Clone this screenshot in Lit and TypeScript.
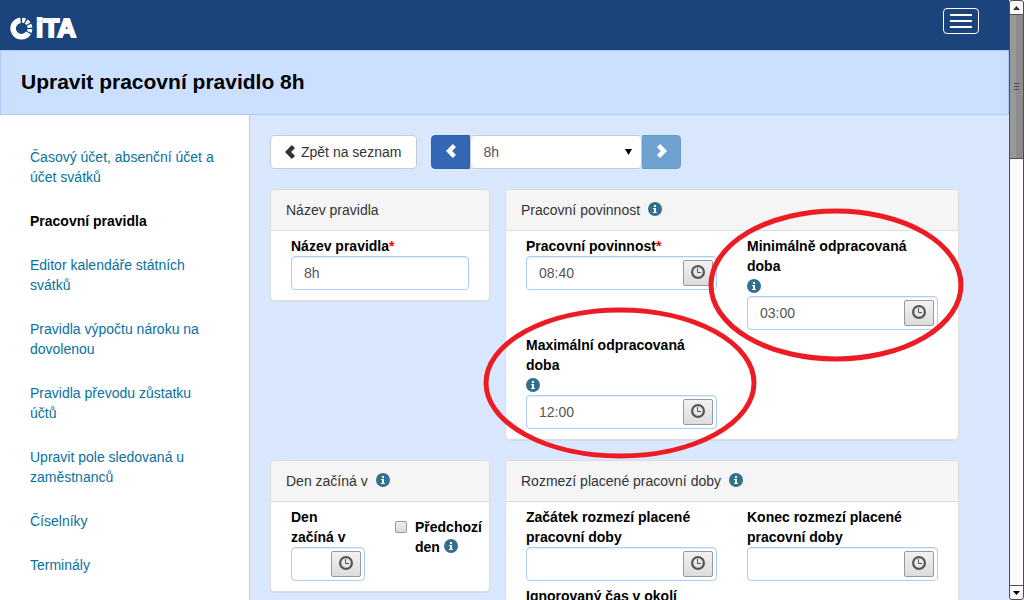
import { LitElement, html, css, svg, nothing } from "lit";
import { customElement, property } from "lit/decorators.js";

const infoIcon = html`<svg class="info" viewBox="0 0 14 14" width="14" height="14" aria-hidden="true">
  <circle cx="7" cy="7" r="7" fill="#31708f" />
  <path d="M6 3h2v2H6zM5 6h3v4h1v1H5v-1h1V7H5z" fill="#fff" />
</svg>`;

const chevron = (left: boolean) => html`<svg class="chevron" viewBox="0 0 10 14" width="10" height="14" aria-hidden="true">
  ${left
    ? svg`<path d="M6.8 0 10 3 6.2 7l3.8 4-3.2 3L0 7z" fill="currentColor" />`
    : svg`<path d="M3.2 0 0 3l3.8 4L0 11l3.2 3L10 7z" fill="currentColor" />`}
</svg>`;

const NAV = [
  "Časový účet, absenční účet a účet svátků",
  "Pracovní pravidla",
  "Editor kalendáře státních svátků",
  "Pravidla výpočtu nároku na dovolenou",
  "Pravidla převodu zůstatku účtů",
  "Upravit pole sledovaná u zaměstnanců",
  "Číselníky",
  "Terminály",
];

@customElement("form-field")
class FormField extends LitElement {
  @property() label = "";
  @property() value = "";
  @property({ type: Boolean }) required = false;
  @property({ type: Boolean }) info = false;
  @property({ type: Boolean }) time = false;

  static styles = css`
    :host { display: block; min-width: 0; }
    label { display: block; font-weight: bold; color: #000; }
    .star { color: #f00; }
    .hint { height: 20px; display: flex; align-items: center; }
    .box {
      display: flex;
      box-sizing: border-box;
      height: 34px;
      padding: 3px;
      background: #fff;
      border: 1px solid #a9cbff;
      border-radius: 4px;
      box-shadow: inset 0 1px 1px rgba(0, 0, 0, 0.075);
    }
    input {
      flex: 1;
      min-width: 0;
      padding: 0 9px;
      border: 0;
      background: none;
      font: inherit;
      color: #555;
      outline: 0;
    }
    button {
      flex: none;
      display: grid;
      place-items: center;
      width: 30px;
      height: 26px;
      padding: 0 0 2px;
      border: 1px solid #999;
      border-radius: 2px;
      background: linear-gradient(#f2f2f2, #dcdcdc);
      color: #555;
    }
  `;

  render() {
    return html`
      <label for="field">${this.label}${this.required ? html`<span class="star">*</span>` : nothing}</label>
      ${this.info ? html`<div class="hint">${infoIcon}</div>` : nothing}
      <div class="box">
        <input id="field" type="text" .value=${this.value} />
        ${this.time
          ? html`<button type="button" aria-label="Vybrat čas">
              <svg viewBox="0 0 14 14" width="14" height="14" fill="none" stroke="currentColor">
                <circle cx="7" cy="7" r="5.9" stroke-width="2.2" />
                <path d="M6.5 3v4.5H10" stroke-width="1" />
              </svg>
            </button>`
          : nothing}
      </div>
    `;
  }
}

@customElement("info-card")
class InfoCard extends LitElement {
  @property() heading = "";
  @property({ type: Boolean }) info = false;

  static styles = css`
    :host {
      display: block;
      position: relative;
      background: #fff;
      border: 1px solid #ddd;
      border-radius: 4px;
      box-shadow: 0 1px 1px rgba(0, 0, 0, 0.05);
    }
    h2 {
      display: flex;
      align-items: center;
      gap: 8px;
      margin: 0;
      padding: 10px 15px;
      font-size: 14px;
      font-weight: normal;
      line-height: 20px;
      color: #333;
      background: #f5f5f5;
      border-bottom: 1px solid #ddd;
      border-radius: 3px 3px 0 0;
    }
    .body { padding: 5px 20px 10px; }
    .info { margin-bottom: 2px; }
  `;

  render() {
    return html`
      <h2>${this.heading}${this.info ? infoIcon : nothing}</h2>
      <div class="body"><slot></slot></div>
    `;
  }
}

@customElement("app-root")
class AppRoot extends LitElement {
  static styles = css`
    :host {
      display: flex;
      height: 100vh;
      overflow: hidden;
      font: 14px/20px "Liberation Sans", Arial, sans-serif;
      color: #333;
      background: #dae8ff;
    }
    .page { flex: 1; min-width: 0; display: flex; flex-direction: column; }
    .top {
      flex: none;
      display: flex;
      justify-content: space-between;
      align-items: flex-start;
      box-sizing: border-box;
      height: 50px;
      padding: 8px 30px 0 10px;
      background: #1b437c;
    }
    .logo {
      display: flex;
      align-items: center;
      gap: 3px;
      margin-top: 8px;
      color: #fff;
      text-decoration: none;
      font: bold 26px/24px "Liberation Sans", Arial, sans-serif;
      -webkit-text-stroke: 2px #fff;
    }
    .menu {
      display: flex;
      flex-direction: column;
      justify-content: center;
      gap: 4px;
      width: 36px;
      height: 26px;
      padding: 0 6px;
      border: 1px solid #fff;
      border-radius: 4px;
      background: none;
    }
    .menu span { height: 2px; background: #fff; }
    .title {
      flex: none;
      padding: 19px 20px 20px;
      border: 1px solid #a9cbff;
      background: #cbdfff;
    }
    h1 { margin: 0; font-size: 21px; line-height: 24px; color: #000; }
    .columns { flex: 1; min-height: 0; display: flex; }
    nav {
      flex: none;
      box-sizing: border-box;
      width: 250px;
      padding: 32px 30px;
      overflow: hidden;
      border-right: 1px solid #a9cbff;
      background: #fff;
      display: flex;
      flex-direction: column;
      gap: 24px;
    }
    nav a { color: #0871a0; text-decoration: none; }
    nav a.current { color: #000; font-weight: bold; }
    main { flex: 1; min-width: 0; padding: 20px 50px 0 20px; overflow: hidden; }
    .toolbar { display: flex; gap: 14px; margin-bottom: 20px; }
    .back {
      display: flex;
      align-items: center;
      gap: 6px;
      height: 34px;
      padding: 0 15px 0 14px;
      border: 1px solid #ccc;
      border-radius: 4px;
      background: #fff;
      font: inherit;
      color: #333;
    }
    .picker { display: flex; width: 250px; }
    .step {
      display: grid;
      place-items: center;
      width: 39px;
      height: 34px;
      padding: 0 0 2px;
      border: 1px solid #2e62ae;
      background: #3468b4;
      color: #fff;
      border-radius: 4px 0 0 4px;
    }
    .step.next { border-color: #669bcb; background: #6fa2d0; border-radius: 0 4px 4px 0; }
    .choice { position: relative; flex: 1; display: flex; }
    select {
      flex: 1;
      appearance: none;
      height: 34px;
      padding: 0 12px;
      border: 1px solid #ccc;
      border-radius: 4px;
      background: #fff;
      font: inherit;
      color: #555;
    }
    .arrow { position: absolute; right: 10px; top: 14px; pointer-events: none; }
    .cards {
      display: grid;
      grid-template-columns: minmax(0, 220fr) minmax(0, 454fr);
      gap: 20px 15px;
      align-items: start;
    }
    .pair {
      display: grid;
      grid-template-columns: repeat(2, minmax(0, 1fr));
      gap: 5px 30px;
      align-items: start;
    }
    .check { display: flex; gap: 8px; margin-top: 10px; font-weight: bold; color: #000; }
    .check input {
      appearance: none;
      flex: none;
      box-sizing: border-box;
      width: 12px;
      height: 12px;
      margin: 4px 0 0;
      border: 1px solid #999;
      border-radius: 2px;
      background: linear-gradient(#eee, #dcdcdc);
    }
    .check .info { vertical-align: -1px; }
    .ring { position: absolute; overflow: visible; pointer-events: none; z-index: 1; }
    .ring.min { left: 203px; top: 19px; }
    .ring.max { left: -22px; top: 117px; }
    .scroll {
      flex: none;
      box-sizing: border-box;
      width: 15px;
      display: flex;
      flex-direction: column;
      border: 1px solid #4d4d4d;
      border-radius: 3px;
      background: #fcfcfc;
    }
    .scroll button {
      flex: none;
      display: grid;
      place-items: center;
      height: 13px;
      padding: 0;
      border: 0;
      background: none;
    }
    .track { flex: 1; border-bottom: 1px solid #4d4d4d; }
    .thumb {
      box-sizing: border-box;
      height: 25.4%;
      min-height: 20px;
      border: solid #4d4d4d;
      border-width: 1px 0;
      background: linear-gradient(90deg, #999 50%, #8c8c8c 50%);
      display: flex;
      flex-direction: column;
      align-items: center;
      justify-content: center;
      gap: 2px;
    }
    .thumb span { width: 5px; height: 1px; background: #4d4d4d; }
  `;

  render() {
    return html`
      <div class="page">
        <header class="top">
          <a class="logo" href="#">
            <svg viewBox="0 0 23 23" width="23" height="23" fill="none" aria-hidden="true">
              <path d="M10.5 3.2A8.3 8.3 0 1 0 18.4 16" stroke="#fff" stroke-width="5.6" />
              <circle cx="11.5" cy="11.5" r="8.5" stroke="#fff" stroke-width="4.8"
                pathLength="120" stroke-dasharray="7 3 7 3 7 3 7 3 7 73" transform="rotate(-86 11.5 11.5)" />
            </svg>
            <span>iTA</span>
          </a>
          <button class="menu" type="button" aria-label="Menu"><span></span><span></span><span></span></button>
        </header>
        <div class="title"><h1>Upravit pracovní pravidlo 8h</h1></div>
        <div class="columns">
          <nav>
            ${NAV.map((t, i) => html`<a href="#" class=${i === 1 ? "current" : ""}>${t}</a>`)}
          </nav>
          <main>
            <div class="toolbar">
              <button class="back" type="button">${chevron(true)}Zpět na seznam</button>
              <div class="picker">
                <button class="step" type="button" aria-label="Předchozí">${chevron(true)}</button>
                <div class="choice">
                  <select aria-label="Pravidlo"><option>8h</option></select>
                  <svg class="arrow" viewBox="0 0 7 6" width="7" height="6" aria-hidden="true"><path d="M0 0h7L3.5 6z" /></svg>
                </div>
                <button class="step next" type="button" aria-label="Další">${chevron(false)}</button>
              </div>
            </div>
            <div class="cards">
              <info-card heading="Název pravidla">
                <form-field label="Název pravidla" value="8h" required></form-field>
              </info-card>
              <info-card heading="Pracovní povinnost" info>
                <div class="pair">
                  <form-field label="Pracovní povinnost" value="08:40" required time></form-field>
                  <form-field label="Minimálně odpracovaná doba" value="03:00" info time></form-field>
                  <form-field label="Maximální odpracovaná doba" value="12:00" info time></form-field>
                </div>
                <svg class="ring min" width="254" height="152" fill="none">
                  <ellipse cx="127" cy="76" rx="125" ry="74" stroke="#ed1c24" stroke-width="5" />
                </svg>
                <svg class="ring max" width="272" height="152" fill="none">
                  <ellipse cx="136" cy="76" rx="134" ry="73" stroke="#ed1c24" stroke-width="5" />
                </svg>
              </info-card>
              <info-card heading="Den začíná v" info>
                <div class="pair">
                  <form-field label="Den začíná&nbsp;v" time></form-field>
                  <label class="check"><input type="checkbox" /><span>Předchozí den ${infoIcon}</span></label>
                </div>
              </info-card>
              <info-card heading="Rozmezí placené pracovní doby" info>
                <div class="pair">
                  <form-field label="Začátek rozmezí placené pracovní doby" time></form-field>
                  <form-field label="Konec rozmezí placené pracovní doby" time></form-field>
                  <form-field label="Ignorovaný čas v okolí" time></form-field>
                </div>
              </info-card>
            </div>
          </main>
        </div>
      </div>
      <div class="scroll">
        <button type="button" aria-label="Nahoru"><svg width="7" height="4"><path d="M3.5 0 7 4H0z" fill="#333" /></svg></button>
        <div class="track"><div class="thumb"><span></span><span></span><span></span></div></div>
        <button type="button" aria-label="Dolů"><svg width="7" height="4"><path d="M0 0h7L3.5 4z" /></svg></button>
      </div>
    `;
  }
}
